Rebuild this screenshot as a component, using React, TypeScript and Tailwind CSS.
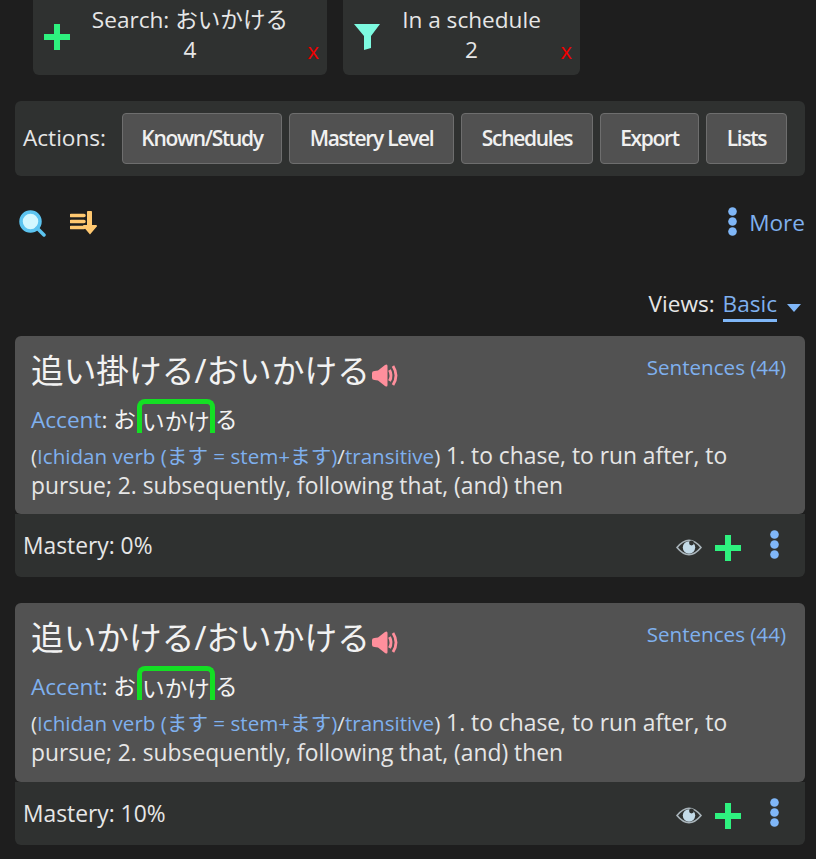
import React from "react";

const font = { fontFamily: '"Open Sans", "Noto Sans CJK JP", sans-serif' };

function Plus({ className = "" }: { className?: string }) {
  return (
    <svg viewBox="0 0 26 26" className={className}>
      <path d="M10 0h6v10h10v6H16v10h-6V16H0v-6h10z" fill="#2ef27f" />
    </svg>
  );
}

function Dots({ className = "" }: { className?: string }) {
  return (
    <svg viewBox="0 0 9 29" className={className}>
      <circle cx="4.5" cy="4.5" r="4.3" fill="#7fb6f7" />
      <circle cx="4.5" cy="14.5" r="4.3" fill="#7fb6f7" />
      <circle cx="4.5" cy="24.5" r="4.3" fill="#7fb6f7" />
    </svg>
  );
}

function Speaker() {
  return (
    <svg viewBox="0 0 26 23" className="ml-[2px] h-[23px] w-[26px] translate-y-[4px]">
      <path d="M0 9 Q0 7 2.500 7 L6 6.500 L13 1 Q15.500 -0.500 15.500 2 L15.500 21 Q15.500 23.500 13 22 L6 16.500 L2.500 16 Q0 16 0 14z" fill="#ff8f9c" />
      <path d="M17.500 6 Q20.500 11.500 17.500 17" fill="none" stroke="#ff8f9c" strokeWidth="3" />
      <path d="M21 2 Q27 11.500 21 21" fill="none" stroke="#ff8f9c" strokeWidth="2.800" />
    </svg>
  );
}

function Eye() {
  return (
    <svg viewBox="0 0 26 19" className="h-[19px] w-[26px]">
      <path d="M1 9.500 Q13 -5 25 9.500 Q13 24 1 9.500z" fill="none" stroke="#a9b4ba" strokeWidth="1.600" />
      <circle cx="13" cy="9.500" r="6.200" fill="#c4dbe8" />
      <circle cx="15.500" cy="5" r="2.400" fill="#2f3130" />
    </svg>
  );
}

function FilterChip({ icon, title, count, width }: { icon: React.ReactNode; title: string; count: string; width: string }) {
  return (
    <div className={`relative flex h-[75px] items-center rounded-b-[6px] bg-[#2f3130] ${width}`}>
      <div className="flex w-[48px] shrink-0 justify-center pb-[1px]">{icon}</div>
      <div className="flex-1 pb-[5px] pr-[28px] text-center leading-[30px] text-[#e6e6e6]">
        <div>{title}</div>
        <div>{count}</div>
      </div>
      <span className="absolute bottom-[12px] right-[8px] text-[22px] leading-[26px] text-[#f00000]">x</span>
    </div>
  );
}

function ActionButton({ label, width }: { label: string; width: string }) {
  return (
    <button type="button" className={`h-[51px] rounded-[4px] border border-[#6e6e6e] bg-[#515151] text-center text-[21px] font-semibold tracking-[-1.3px] text-[#f0f0f0] ${width}`}>
      {label}
    </button>
  );
}

function WordCard({ word, mastery, height }: { word: string; mastery: string; height: string }) {
  return (
    <div>
      <div className={`relative rounded-[6px] bg-[#525252] px-[16px] pt-[11px] ${height}`}>
        <a className="absolute right-[19px] top-[18px] text-[20.6px] leading-[26px] text-[#7fb0ee]">Sentences (44)</a>
        <div className="flex items-center text-[32.7px] leading-[48px] text-[#f2f2f2]">
          {word}
          <Speaker />
        </div>
        <div className="mt-[5px] flex h-[36px] items-end leading-[32px] text-[#f2f2f2]">
          <span className="text-[#7fb0ee]">Accent</span>: お
          <span className="ml-[1px] inline-block h-[34px] w-[78px] -translate-y-[3px] whitespace-nowrap rounded-t-[8px] border-x-[5px] border-t-[5px] border-[#14df24] text-center leading-[36px]">いかけ</span>
          る
        </div>
        <div className="mt-[5px] text-[22.8px] leading-[30px] text-[#e6e6e6]">
          <span className="text-[20.6px]">(<span className="text-[#7fb0ee]">Ichidan verb (ます = stem+ます)</span>/<span className="text-[#7fb0ee]">transitive</span>)</span> 1. to chase, to run after, to pursue; 2. subsequently, following that, (and) then
        </div>
      </div>
      <div className="flex h-[63px] items-center justify-between rounded-b-[6px] bg-[#2f3130] pl-[8px] pr-[26px] text-[#e6e6e6]">
        <span className="text-[22.8px] leading-[32px]">{mastery}</span>
        <div className="flex items-center pt-[4px]">
          <Eye />
          <Plus className="ml-[13px] h-[26px] w-[26px]" />
          <Dots className="ml-[29px] h-[29px] w-[9px] -translate-y-[3px]" />
        </div>
      </div>
    </div>
  );
}

export default function App() {
  return (
    <div style={font} className="h-[859px] w-[816px] overflow-hidden bg-[#1e1e1e] text-[22.6px]">
      <div className="flex gap-[16px] pl-[33px]">
        <FilterChip
          width="w-[294px]"
          title="Search: おいかける"
          count="4"
          icon={<Plus className="h-[26px] w-[26px]" />}
        />
        <FilterChip
          width="w-[237px]"
          title="In a schedule"
          count="2"
          icon={
            <svg viewBox="0 0 26 26" className="h-[26px] w-[26px]">
              <path d="M0 0H26L17 12V24L10 26V12z" fill="#7dfae0" />
            </svg>
          }
        />
      </div>

      <div className="ml-[15px] mr-[11px] mt-[26px] flex h-[75px] items-center rounded-[6px] bg-[#2f3130] pl-[8px] text-[#e6e6e6]">
        <span className="w-[99px] shrink-0 -translate-y-[1px]">Actions:</span>
        <div className="flex gap-[7px]">
          <ActionButton label="Known/Study" width="w-[160px]" />
          <ActionButton label="Mastery Level" width="w-[165px]" />
          <ActionButton label="Schedules" width="w-[132px]" />
          <ActionButton label="Export" width="w-[99px]" />
          <ActionButton label="Lists" width="w-[81px]" />
        </div>
      </div>

      <div className="ml-[15px] mr-[11px] mt-[30px] flex h-[34px] items-center justify-between">
        <div className="flex items-center gap-[24px] pl-[4px]">
          <svg viewBox="0 0 27 27" className="h-[27px] w-[27px]">
            <circle cx="11.500" cy="11.500" r="9.500" fill="#d2f7ff" stroke="#5cc4f0" strokeWidth="3.500" />
            <path d="M18 18l7 7" stroke="#5cc4f0" strokeWidth="3.500" strokeLinecap="round" />
          </svg>
          <svg viewBox="0 0 27 24" className="h-[24px] w-[27px]">
            <path d="M1 4.500h13M1 10.500h13M1 16.500h13" stroke="#ffc870" strokeWidth="3.500" strokeLinecap="round" />
            <path d="M17 1.500a1.500 1.500 0 0 1 5 0V14H26a1 1 0 0 1 .8 1.600L20 23.500 13.200 15.600A1 1 0 0 1 14 14h3z" fill="#ffc870" />
          </svg>
        </div>
        <div className="flex items-center gap-[12px] text-[#7fb0ee]">
          <Dots className="h-[29px] w-[9px] -translate-y-[2px]" />
          <span className="leading-[34px]">More</span>
        </div>
      </div>

      <div className="ml-[15px] mr-[15px] mt-[46px] flex h-[36px] items-start justify-end text-[#e6e6e6]">
        <span className="pr-[2px] leading-[36px]">Views:&nbsp;</span>
        <span className="h-[36px] border-b-[3px] border-[#7fb6f7] leading-[36px] text-[#7fb0ee]">Basic</span>
        <svg viewBox="0 0 14 8" className="ml-[10px] mt-[18px] h-[8px] w-[14px]">
          <path d="M0 0H14L7 8z" fill="#7fb6f7" />
        </svg>
      </div>

      <div className="ml-[15px] mr-[11px] mt-[14px] flex flex-col gap-[26px]">
        <WordCard word="追い掛ける/おいかける" mastery="Mastery: 0%" height="h-[178px]" />
        <WordCard word="追いかける/おいかける" mastery="Mastery: 10%" height="h-[179px]" />
      </div>
    </div>
  );
}
